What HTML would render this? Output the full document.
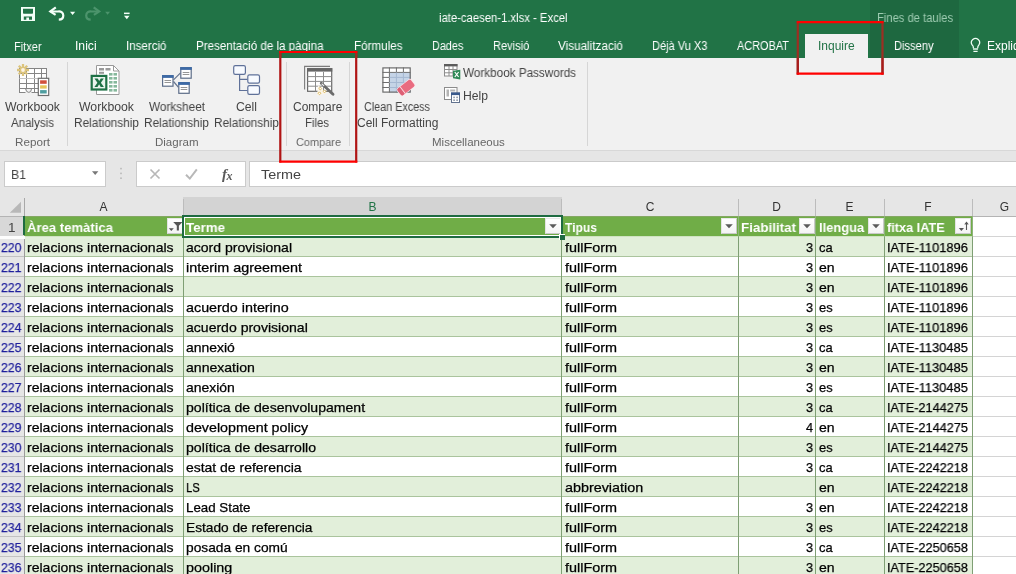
<!DOCTYPE html>
<html lang="ca"><head><meta charset="utf-8"><title>iate-caesen-1.xlsx - Excel</title>
<style>
html,body{margin:0;padding:0;background:#e6e6e6;}
#app{position:relative;width:1016px;height:574px;overflow:hidden;background:#e6e6e6;font-family:"Liberation Sans",sans-serif;font-size:12px;color:#444;}
#app div,#app span,#app svg{position:absolute;box-sizing:border-box;}
.t{will-change:transform;white-space:nowrap;transform-origin:0 50%;line-height:16px;height:16px;}
#titlebar{left:0;top:0;width:1016px;height:58px;background:#217346;}
#ctx{left:870px;top:0;width:89px;height:58px;background:#1e6840;}
#tabsel{left:805px;top:34px;width:63px;height:24px;background:#f1f1f1;}
.w{color:#fff;}
#ribbon{left:0;top:58px;width:1016px;height:92px;background:#f1f1f1;}
#ribline{left:0;top:150px;width:1016px;height:1px;background:#d8d8d8;}
.sep{width:1px;background:#d6d6d6;top:62px;height:84px;}
.gl{color:#666;}
.bl{color:#444;}
#fbar{left:0;top:151px;width:1016px;height:46px;background:#e6e6e6;}
.box{background:#fff;border:1px solid #cbcbcb;top:161px;height:26px;}
#colhdr{left:0;top:197px;width:1016px;height:20px;background:#e6e6e6;}
.ch{top:197px;height:20px;border-right:1px solid #c6c6c6;}
.cht{color:#333;font-size:12.5px;}
#grid{left:0;top:0;width:1016px;height:574px;}
.row{left:0;width:1016px;height:20px;}
.row.bg{background:linear-gradient(90deg,#e6e6e6 0,#e6e6e6 24px,#e2efda 24px,#e2efda 972px,#fff 972px);}
.row.bw{background:linear-gradient(90deg,#e6e6e6 0,#e6e6e6 24px,#fff 24px);}
.vl{width:1px;background:#bcbcbc;}
.fb{width:16px;height:16px;background:linear-gradient(#fff,#f4f4f4);border:1px solid #c9c9c9;border-top-color:#e9e9e9;border-left-color:#e3e3e3;}
.ctr{transform:none;}
.ce{-webkit-text-stroke:0.25px #000;}
.rn{-webkit-text-stroke:0.25px #1f1f9c;}

</style></head><body>
<div id="app">
<!-- title bar -->
<div id="titlebar"></div>
<div id="ctx"></div>
<div id="tabsel"></div>
<!-- quick access toolbar -->
<svg id="qat" style="left:0;top:0" width="140" height="30" viewBox="0 0 140 30">
  <rect x="21" y="7" width="14" height="14" fill="#f4fff8"/>
  <path d="M23 8.800h10v4.200q0 .8-.8.800h-8.400q-.8 0-.8-.8z" fill="#217346"/>
  <path d="M23.800 16.500h8.200v3.200h-3v-2.100h-2.700v2.100h-2.500z" fill="#217346"/>
  <g fill="none" stroke="#f4fff8" stroke-width="2.200">
    <path d="M50.500 11.500h7.500a4.200 4.200 0 0 1 5.300 4c0 2.400-1.800 4.100-4.500 4.200" />
    <path d="M55.800 7.300l-5.500 4.200 5.300 3.400" stroke-linejoin="miter"/>
  </g>
  <path d="M70 11.800h5.200l-2.600 3.300z" fill="#f4fff8"/>
  <g fill="none" stroke="#4c946c" stroke-width="2.200">
    <path d="M99 11.500h-7.500a4.200 4.200 0 0 0-5.300 4c0 2.400 1.800 4.100 4.500 4.200" />
    <path d="M93.700 7.300l5.500 4.200-5.300 3.400"/>
  </g>
  <path d="M105.200 11.800h4.800l-2.400 3z" fill="#4c946c"/>
  <rect x="124" y="12.600" width="5.600" height="1.500" fill="#f4fff8"/>
  <path d="M124 15.800h5.600l-2.800 3.400z" fill="#f4fff8"/>
</svg>
<!-- lightbulb -->
<svg style="left:968px;top:36px" width="16" height="18" viewBox="0 0 16 18">
  <path d="M5.300 12.300v-1.200c0-1-.7-1.600-1.200-2.200a4.100 4.100 0 1 1 6.800 0c-.5.600-1.100 1.200-1.100 2.200v1.200" fill="none" stroke="#f0fff6" stroke-width="1.250"/>
  <rect x="5" y="12.300" width="5" height="1.400" fill="#f0fff6"/>
  <rect x="5.400" y="14.800" width="4.200" height="1.200" fill="#f0fff6"/>
</svg>

<!-- ribbon -->
<div id="ribbon"></div>
<div id="ribline"></div>
<div class="sep" style="left:67px"></div>
<div class="sep" style="left:286px"></div>
<div class="sep" style="left:349px"></div>
<div class="sep" style="left:587px"></div>

<!-- icon: workbook analysis -->
<svg style="left:16px;top:62px" width="36" height="36" viewBox="16 62 36 36">
  <rect x="19.500" y="68.500" width="27" height="24" fill="#fff" stroke="#858585"/>
  <path d="M19.500 73.500h27M19.500 83.500h27M19.500 88.500h27M26.500 68.500v24M34.500 68.500v24M41.500 68.500v10" stroke="#858585" fill="none"/>
  <path d="M19.500 78.500h19" stroke="#c4c4c4" fill="none"/>
  <rect x="25.500" y="89.200" width="6" height="4.500" fill="#f1f1f1"/>
  <path d="M25.500 88.800q.8 3.600 3.300 3.600t2.700-3.600" stroke="#858585" fill="none"/>
  <g stroke="#dcc47c" stroke-width="2.300" stroke-linecap="butt">
    <path d="M23 64v12M17 70h12M18.800 65.800l8.400 8.400M27.200 65.800l-8.400 8.400"/>
  </g>
  <circle cx="23" cy="70" r="1.900" fill="#fdf3e4"/>
  <rect x="38.300" y="78.300" width="10.400" height="17.200" fill="#fff" stroke="#6e6e6e" stroke-width="1.200"/>
  <rect x="40.100" y="80.300" width="6.600" height="3.500" fill="#d2503c"/>
  <rect x="40.100" y="85.300" width="6.600" height="3.300" fill="#e6c458"/>
  <rect x="40.100" y="90.100" width="6.600" height="3.400" fill="#4f9ea0"/>
</svg>

<!-- icon: workbook relationship -->
<svg style="left:88px;top:62px" width="36" height="36" viewBox="88 62 36 36">
  <path d="M96.500 65.500h17l5.500 5.500v23.500h-22.500z" fill="#fff" stroke="#9a9a9a"/>
  <path d="M113.500 65.500v5.500h5.500" fill="none" stroke="#9a9a9a"/>
  <g fill="#9a9a9a"><rect x="99" y="68" width="5" height="2.500"/><rect x="105.500" y="68" width="5" height="2.500"/><rect x="99" y="71.800" width="5" height="2"/></g>
  <g fill="#86b89c">
    <rect x="109" y="73" width="3.500" height="2.600"/><rect x="113.500" y="73" width="3.500" height="2.600"/>
    <rect x="109" y="77" width="3.500" height="2.600"/><rect x="113.500" y="77" width="3.500" height="2.600"/>
    <rect x="109" y="81" width="3.500" height="2.600"/><rect x="113.500" y="81" width="3.500" height="2.600"/>
    <rect x="109" y="85" width="3.500" height="2.600"/><rect x="113.500" y="85" width="3.500" height="2.600"/>
    <rect x="109" y="89" width="3.500" height="2.600"/><rect x="113.500" y="89" width="3.500" height="2.600"/>
  </g>
  <rect x="90.600" y="74.800" width="16.800" height="15.800" fill="#1e7145"/>
  <rect x="92.800" y="77" width="12.400" height="11.400" fill="#e9f3ed"/>
  <path d="M94.500 78.500h3.200l1.500 2.600 1.600-2.600h3l-2.900 4.200 3 4.300h-3.200l-1.600-2.700-1.600 2.700h-3.100l3-4.300z" fill="#1e7145"/>
</svg>

<!-- icon: worksheet relationship -->
<svg style="left:158px;top:62px" width="38" height="36" viewBox="158 62 38 36">
  <path d="M173.500 79.800l7-7M173.500 81.500l5 5.800" stroke="#66758f" stroke-width="1.200" fill="none"/>
  <g>
    <rect x="162.600" y="75.700" width="10.400" height="10.500" fill="#fff" stroke="#5d6d88" stroke-width="1.200"/>
    <rect x="162" y="75.100" width="11.600" height="2.800" fill="#3d6aa6"/>
    <path d="M164.500 80.500h6.600M164.500 82.500h6.600" stroke="#8a8a8a" stroke-width=".9"/>
  </g>
  <g>
    <rect x="180.800" y="67.700" width="10.400" height="10.500" fill="#fff" stroke="#5d6d88" stroke-width="1.200"/>
    <rect x="180.200" y="67.100" width="11.600" height="2.800" fill="#3d6aa6"/>
    <path d="M182.700 72.500h6.600M182.700 74.500h6.600" stroke="#8a8a8a" stroke-width=".9"/>
  </g>
  <g>
    <rect x="178.800" y="82.700" width="10.400" height="10.600" fill="#fff" stroke="#5d6d88" stroke-width="1.200"/>
    <rect x="178.200" y="82.100" width="11.600" height="2.800" fill="#3d6aa6"/>
    <path d="M180.700 87.500h6.600M180.700 89.500h6.600" stroke="#8a8a8a" stroke-width=".9"/>
  </g>
</svg>

<!-- icon: cell relationship -->
<svg style="left:228px;top:62px" width="36" height="36" viewBox="228 62 36 36">
  <path d="M239.600 74.500v16h8M239.600 79.400h8" stroke="#5f7199" stroke-width="1.200" fill="none"/>
  <rect x="233.700" y="65.700" width="11.700" height="8.600" rx="1.600" fill="#f7faff" stroke="#5f7199" stroke-width="1.200"/>
  <rect x="247.800" y="74.800" width="11.700" height="8.300" rx="1.600" fill="#f7faff" stroke="#5f7199" stroke-width="1.200"/>
  <rect x="247.800" y="85.700" width="11.700" height="8.600" rx="1.600" fill="#f7faff" stroke="#5f7199" stroke-width="1.200"/>
</svg>

<!-- icon: compare files -->
<svg style="left:300px;top:62px" width="38" height="36" viewBox="300 62 38 36">
  <path d="M304.600 89.600v-23.200h25.400" fill="none" stroke="#7c7c7c" stroke-width="1.100"/>
  <rect x="307.600" y="68.700" width="24.100" height="22.600" fill="#fff" stroke="#6a6a6a" stroke-width="1.200"/>
  <rect x="307" y="68.100" width="25.300" height="3.500" fill="#666"/>
  <path d="M307.500 76.600h24M307.500 81.400h24M307.500 86.200h24M315.500 72v19.500M323.500 72v19.500" stroke="#8c8c8c" fill="none"/>
  <path d="M318 85l8.500 8.500l-9.500 2z" fill="#fbf4e6"/>
  <path d="M321.300 83.300l11.700 11" stroke="#6b6b6b" stroke-width="2.900" stroke-linecap="round" fill="none"/>
  <path d="M322 84l1.800 1.700" stroke="#f0f0f0" stroke-width="1.100" stroke-linecap="round" fill="none"/>
  <g fill="#fff" stroke="#d9b65a" stroke-width=".9">
    <rect x="319.300" y="87.500" width="2" height="2" transform="rotate(45 320.300 88.500)"/>
    <rect x="323.500" y="90.400" width="2" height="2" transform="rotate(45 324.500 91.400)"/>
    <rect x="318.500" y="92.300" width="2" height="2" transform="rotate(45 319.500 93.300)"/>
  </g>
</svg>

<!-- icon: clean excess -->
<svg style="left:378px;top:62px" width="40" height="36" viewBox="378 62 40 36">
  <rect x="382.300" y="67.300" width="28.400" height="25.300" fill="#fff"/>
  <rect x="389.400" y="72.400" width="21.300" height="20.200" fill="#c5d4e7"/>
  <path d="M382.500 72.400h7M382.500 77.400h7M382.500 82.500h7M382.500 87.500h7M389.400 72.400h21" stroke="#6e6e6e" fill="none"/>
  <path d="M389.400 67.500v25M396.400 67.500v5M403.400 67.500v5" stroke="#6e6e6e" fill="none"/>
  <path d="M396.400 72.500v20M403.400 72.500v20M389.400 77.400h21M389.400 82.500h21M389.400 87.500h21" stroke="#a5b8d2" fill="none"/>
  <rect x="382.900" y="67.900" width="27.300" height="24.200" fill="none" stroke="#6a6a6a" stroke-width="1.200"/>
  <g transform="rotate(-38 406 87.500)">
    <rect x="396.700" y="82.600" width="18.600" height="9.800" rx="2.400" fill="#fbe9ec"/>
    <rect x="397.500" y="83.300" width="17" height="8.400" rx="1.800" fill="#e96c80"/>
    <rect x="397.500" y="83.300" width="4" height="8.400" rx="1.600" fill="#dd5f75"/>
    <rect x="401.300" y="83.300" width=".9" height="8.400" fill="#fbe3e7"/>
  </g>
</svg>

<!-- icon small: workbook passwords -->
<svg style="left:442px;top:62px" width="22" height="20" viewBox="442 62 22 20">
  <rect x="444.500" y="64.500" width="12.500" height="11.500" fill="#fff" stroke="#8c8c8c"/>
  <rect x="444" y="64" width="13.500" height="2.400" fill="#5c5c5c"/>
  <path d="M444.500 69.500h12.500M444.500 72.800h12.500M449 66v10M453 66v10" stroke="#8c8c8c" fill="none"/>
  <path d="M453 70.800l7.300-1.100v9.700l-7.300-1.100z" fill="#2f8a57"/>
  <path d="M454.800 72l3.800 5M458.600 72l-3.800 5" stroke="#fff" stroke-width="1.200" fill="none"/>
</svg>
<!-- icon small: help -->
<svg style="left:442px;top:85px" width="22" height="20" viewBox="442 85 22 20">
  <rect x="444.500" y="87.500" width="12.500" height="12" fill="#fff" stroke="#8c8c8c"/>
  <rect x="446.500" y="89.500" width="2.500" height="7" fill="#b5b5b5"/>
  <rect x="450.200" y="89.500" width="5" height="2" fill="#b5b5b5"/>
  <rect x="451.500" y="93" width="8" height="9.500" fill="#fff" stroke="#62738f"/>
  <rect x="451" y="92.500" width="9" height="2.600" fill="#3a5a8c"/>
  <g fill="#9aa3b0"><rect x="453.200" y="96.600" width="1.800" height="1.600"/><rect x="456.200" y="96.600" width="1.800" height="1.600"/><rect x="453.200" y="99.400" width="1.800" height="1.600"/><rect x="456.200" y="99.400" width="1.800" height="1.600"/></g>
</svg>

<!-- formula bar -->
<div id="fbar"></div>
<div class="box" style="left:4px;width:102px"></div>
<div class="box" style="left:136px;width:110px"></div>
<div class="box" style="left:249px;width:780px"></div>
<svg style="left:88px;top:166px" width="160" height="18" viewBox="88 166 160 18">
  <path d="M92 171.200h6.400l-3.200 3.800z" fill="#777"/>
  <g fill="#b9b9b9"><rect x="120.200" y="167.800" width="1.600" height="1.600"/><rect x="120.200" y="172.600" width="1.600" height="1.600"/><rect x="120.200" y="177.400" width="1.600" height="1.600"/></g>
  <path d="M150.500 169.500l9 9M159.500 169.500l-9 9" stroke="#b8b8b8" stroke-width="1.700" fill="none"/>
  <path d="M186 174.800l3.800 3.800 7-9.200" stroke="#b8b8b8" stroke-width="2" fill="none"/>
</svg>
<span class="t" style="left:222px;top:166px;font-family:'Liberation Serif',serif;font-style:italic;font-weight:bold;font-size:15px;color:#5a5a5a;letter-spacing:-0.5px">f<span style="position:relative;top:1px;font-size:12px;letter-spacing:0">x</span></span>

<!-- column headers -->
<div id="colhdr"></div>
<div style="left:183px;top:197px;width:379px;height:20px;background:#d3d3d3;border-bottom:2px solid #217346"></div>
<div class="vl" style="left:24px;top:198px;height:18px;background:#a8a8a8"></div>
<div class="vl" style="left:183px;top:199px;height:18px"></div>
<div class="vl" style="left:561px;top:199px;height:18px"></div>
<div class="vl" style="left:738px;top:199px;height:18px"></div>
<div class="vl" style="left:815px;top:199px;height:18px"></div>
<div class="vl" style="left:884px;top:199px;height:18px"></div>
<div class="vl" style="left:972px;top:199px;height:18px"></div>
<svg style="left:8px;top:200px" width="15" height="14" viewBox="0 0 15 14"><path d="M13 1.800v11h-11.200z" fill="#b8b8b8"/></svg>

<div style="left:24px;top:216px;width:992px;height:358px;background:#fff"></div>
<div style="left:24px;top:237px;width:948px;height:20px;background:#e2efda"></div>
<div style="left:24px;top:277px;width:948px;height:20px;background:#e2efda"></div>
<div style="left:24px;top:317px;width:948px;height:20px;background:#e2efda"></div>
<div style="left:24px;top:357px;width:948px;height:20px;background:#e2efda"></div>
<div style="left:24px;top:397px;width:948px;height:20px;background:#e2efda"></div>
<div style="left:24px;top:437px;width:948px;height:20px;background:#e2efda"></div>
<div style="left:24px;top:477px;width:948px;height:20px;background:#e2efda"></div>
<div style="left:24px;top:517px;width:948px;height:20px;background:#e2efda"></div>
<div style="left:24px;top:557px;width:948px;height:20px;background:#e2efda"></div>
<div style="left:24px;top:216px;width:948px;height:20px;background:#70ad47"></div>
<div style="left:25px;top:216px;width:947px;height:1px;background:#84a763"></div>
<div style="left:24px;top:236px;width:948px;height:1px;background:#aac49d"></div>
<div style="left:973px;top:236px;width:43px;height:1px;background:#d4d4d4"></div>
<div style="left:24px;top:256px;width:948px;height:1px;background:#aac49d"></div>
<div style="left:973px;top:256px;width:43px;height:1px;background:#d4d4d4"></div>
<div style="left:24px;top:276px;width:948px;height:1px;background:#aac49d"></div>
<div style="left:973px;top:276px;width:43px;height:1px;background:#d4d4d4"></div>
<div style="left:24px;top:296px;width:948px;height:1px;background:#aac49d"></div>
<div style="left:973px;top:296px;width:43px;height:1px;background:#d4d4d4"></div>
<div style="left:24px;top:316px;width:948px;height:1px;background:#aac49d"></div>
<div style="left:973px;top:316px;width:43px;height:1px;background:#d4d4d4"></div>
<div style="left:24px;top:336px;width:948px;height:1px;background:#aac49d"></div>
<div style="left:973px;top:336px;width:43px;height:1px;background:#d4d4d4"></div>
<div style="left:24px;top:356px;width:948px;height:1px;background:#aac49d"></div>
<div style="left:973px;top:356px;width:43px;height:1px;background:#d4d4d4"></div>
<div style="left:24px;top:376px;width:948px;height:1px;background:#aac49d"></div>
<div style="left:973px;top:376px;width:43px;height:1px;background:#d4d4d4"></div>
<div style="left:24px;top:396px;width:948px;height:1px;background:#aac49d"></div>
<div style="left:973px;top:396px;width:43px;height:1px;background:#d4d4d4"></div>
<div style="left:24px;top:416px;width:948px;height:1px;background:#aac49d"></div>
<div style="left:973px;top:416px;width:43px;height:1px;background:#d4d4d4"></div>
<div style="left:24px;top:436px;width:948px;height:1px;background:#aac49d"></div>
<div style="left:973px;top:436px;width:43px;height:1px;background:#d4d4d4"></div>
<div style="left:24px;top:456px;width:948px;height:1px;background:#aac49d"></div>
<div style="left:973px;top:456px;width:43px;height:1px;background:#d4d4d4"></div>
<div style="left:24px;top:476px;width:948px;height:1px;background:#aac49d"></div>
<div style="left:973px;top:476px;width:43px;height:1px;background:#d4d4d4"></div>
<div style="left:24px;top:496px;width:948px;height:1px;background:#aac49d"></div>
<div style="left:973px;top:496px;width:43px;height:1px;background:#d4d4d4"></div>
<div style="left:24px;top:516px;width:948px;height:1px;background:#aac49d"></div>
<div style="left:973px;top:516px;width:43px;height:1px;background:#d4d4d4"></div>
<div style="left:24px;top:536px;width:948px;height:1px;background:#aac49d"></div>
<div style="left:973px;top:536px;width:43px;height:1px;background:#d4d4d4"></div>
<div style="left:24px;top:556px;width:948px;height:1px;background:#aac49d"></div>
<div style="left:973px;top:556px;width:43px;height:1px;background:#d4d4d4"></div>
<div style="left:24px;top:576px;width:948px;height:1px;background:#aac49d"></div>
<div style="left:973px;top:576px;width:43px;height:1px;background:#d4d4d4"></div>
<div style="left:24px;top:236px;width:948px;height:1px;background:#cfe3c2"></div>
<div style="left:183px;top:237px;width:1px;height:337px;background:#7f9f74"></div>
<div style="left:183px;top:216px;width:1px;height:21px;background:#8fb37c"></div>
<div style="left:561px;top:237px;width:1px;height:337px;background:#7f9f74"></div>
<div style="left:561px;top:216px;width:1px;height:21px;background:#8fb37c"></div>
<div style="left:738px;top:237px;width:1px;height:337px;background:#7f9f74"></div>
<div style="left:738px;top:216px;width:1px;height:21px;background:#8fb37c"></div>
<div style="left:815px;top:237px;width:1px;height:337px;background:#7f9f74"></div>
<div style="left:815px;top:216px;width:1px;height:21px;background:#8fb37c"></div>
<div style="left:884px;top:237px;width:1px;height:337px;background:#7f9f74"></div>
<div style="left:884px;top:216px;width:1px;height:21px;background:#8fb37c"></div>
<div style="left:972px;top:237px;width:1px;height:337px;background:#7f9f74"></div>
<div style="left:972px;top:216px;width:1px;height:21px;background:#8fb37c"></div>
<div style="left:0;top:216px;width:24px;height:358px;background:#e6e6e6"></div>
<div style="left:0;top:216px;width:24px;height:20px;background:#d8d8d8"></div>
<div style="left:23px;top:216px;width:2px;height:19px;background:#1e6b41"></div>
<div style="left:24px;top:238px;width:1px;height:336px;background:#9c9c9c"></div>
<div style="left:0;top:236px;width:25px;height:3px;background:#fdfdfd"></div>
<div style="left:0;top:256px;width:24px;height:1px;background:#c2c2c2"></div>
<div style="left:0;top:276px;width:24px;height:1px;background:#c2c2c2"></div>
<div style="left:0;top:296px;width:24px;height:1px;background:#c2c2c2"></div>
<div style="left:0;top:316px;width:24px;height:1px;background:#c2c2c2"></div>
<div style="left:0;top:336px;width:24px;height:1px;background:#c2c2c2"></div>
<div style="left:0;top:356px;width:24px;height:1px;background:#c2c2c2"></div>
<div style="left:0;top:376px;width:24px;height:1px;background:#c2c2c2"></div>
<div style="left:0;top:396px;width:24px;height:1px;background:#c2c2c2"></div>
<div style="left:0;top:416px;width:24px;height:1px;background:#c2c2c2"></div>
<div style="left:0;top:436px;width:24px;height:1px;background:#c2c2c2"></div>
<div style="left:0;top:456px;width:24px;height:1px;background:#c2c2c2"></div>
<div style="left:0;top:476px;width:24px;height:1px;background:#c2c2c2"></div>
<div style="left:0;top:496px;width:24px;height:1px;background:#c2c2c2"></div>
<div style="left:0;top:516px;width:24px;height:1px;background:#c2c2c2"></div>
<div style="left:0;top:536px;width:24px;height:1px;background:#c2c2c2"></div>
<div style="left:0;top:556px;width:24px;height:1px;background:#c2c2c2"></div>
<div style="left:0;top:576px;width:24px;height:1px;background:#c2c2c2"></div>
<div style="left:0;top:216px;width:23px;height:1px;background:#b4b4b4"></div>
<div style="left:973px;top:216px;width:43px;height:1px;background:#b4b4b4"></div>
<div class="fb" style="left:167px;top:218px"></div><svg style="left:167px;top:218px" width="16" height="16" viewBox="0 0 16 16"><path d="M6.200 4h9.300l-3.600 3.800v4.800h-2.100v-4.800z" fill="#555"/><path d="M1.800 10.200h5l-2.500 2.800z" fill="#555"/></svg>
<div class="fb" style="left:545px;top:218px"></div><svg style="left:545px;top:218px" width="16" height="16" viewBox="0 0 16 16"><path d="M4.200 6.200h7.600l-3.800 4z" fill="#5a5a5a"/></svg>
<div class="fb" style="left:721px;top:218px"></div><svg style="left:721px;top:218px" width="16" height="16" viewBox="0 0 16 16"><path d="M4.200 6.200h7.600l-3.800 4z" fill="#5a5a5a"/></svg>
<div class="fb" style="left:799px;top:218px"></div><svg style="left:799px;top:218px" width="16" height="16" viewBox="0 0 16 16"><path d="M4.200 6.200h7.600l-3.800 4z" fill="#5a5a5a"/></svg>
<div class="fb" style="left:868px;top:218px"></div><svg style="left:868px;top:218px" width="16" height="16" viewBox="0 0 16 16"><path d="M4.200 6.200h7.600l-3.800 4z" fill="#5a5a5a"/></svg>
<div class="fb" style="left:955px;top:218px"></div><svg style="left:955px;top:218px" width="16" height="16" viewBox="0 0 16 16"><path d="M3.800 10h5.200l-2.600 3z" fill="#555"/><path d="M11.500 4.500v7.500M9.800 6.500l1.700-2.200 1.700 2.200" stroke="#555" stroke-width="1.100" fill="none"/></svg>
<div style="left:182px;top:215px;width:381px;height:23px;border:2px solid #1e6b41;box-shadow:inset 0 0 0 1px #fff"></div>
<div style="left:559px;top:234px;width:6px;height:6px;background:#1e6b41;border:1px solid #fff;border-right:0;border-bottom:0"></div>
<span class="t" style="left:439.2px;top:10px;font-size:12px;color:#fff;transform:scaleX(0.940);">iate-caesen-1.xlsx - Excel</span>
<span class="t" style="left:876.7px;top:10px;font-size:12px;color:#9fccb2;transform:scaleX(0.934);">Fines de taules</span>
<span class="t" style="left:14.3px;top:39px;font-size:12px;color:#fff;transform:scaleX(0.920);">Fitxer</span>
<span class="t" style="left:75.3px;top:38px;font-size:12px;color:#fff;transform:scaleX(1.012);">Inici</span>
<span class="t" style="left:126.3px;top:38px;font-size:12px;color:#fff;transform:scaleX(0.961);">Inserció</span>
<span class="t" style="left:196.3px;top:38px;font-size:12px;color:#fff;transform:scaleX(0.965);">Presentació de la pàgina</span>
<span class="t" style="left:353.6px;top:38px;font-size:12px;color:#fff;transform:scaleX(0.970);">Fórmules</span>
<span class="t" style="left:431.5px;top:38px;font-size:12px;color:#fff;transform:scaleX(0.902);">Dades</span>
<span class="t" style="left:492.5px;top:38px;font-size:12px;color:#fff;transform:scaleX(0.922);">Revisió</span>
<span class="t" style="left:558.2px;top:38px;font-size:12px;color:#fff;transform:scaleX(0.975);">Visualització</span>
<span class="t" style="left:652.3px;top:38px;font-size:12px;color:#fff;transform:scaleX(0.921);">Déjà Vu X3</span>
<span class="t" style="left:737.2px;top:38px;font-size:12px;color:#fff;transform:scaleX(0.909);">ACROBAT</span>
<span class="t" style="left:893.8px;top:38px;font-size:12px;color:#fff;transform:scaleX(0.928);">Disseny</span>
<span class="t" style="left:818.3px;top:38px;font-size:12px;color:#217346;">Inquire</span>
<span class="t" style="left:987.4px;top:38px;font-size:12px;color:#fff;">Expliqueu-me què voleu fer</span>
<span class="t" style="left:5.0px;top:99px;font-size:12px;color:#444;transform:scaleX(1.022);">Workbook</span>
<span class="t" style="left:11.0px;top:115px;font-size:12px;color:#444;transform:scaleX(0.962);">Analysis</span>
<span class="t" style="left:79.0px;top:99px;font-size:12px;color:#444;transform:scaleX(1.022);">Workbook</span>
<span class="t" style="left:74.0px;top:115px;font-size:12px;color:#444;transform:scaleX(0.984);">Relationship</span>
<span class="t" style="left:149.0px;top:99px;font-size:12px;color:#444;transform:scaleX(0.980);">Worksheet</span>
<span class="t" style="left:144.0px;top:115px;font-size:12px;color:#444;transform:scaleX(0.984);">Relationship</span>
<span class="t" style="left:236.0px;top:99px;font-size:12px;color:#444;transform:scaleX(1.016);">Cell</span>
<span class="t" style="left:214.0px;top:115px;font-size:12px;color:#444;transform:scaleX(0.984);">Relationship</span>
<span class="t" style="left:293.0px;top:99px;font-size:12px;color:#444;transform:scaleX(0.993);">Compare</span>
<span class="t" style="left:305.0px;top:115px;font-size:12px;color:#444;transform:scaleX(0.947);">Files</span>
<span class="t" style="left:364.0px;top:99px;font-size:12px;color:#444;transform:scaleX(0.899);">Clean Excess</span>
<span class="t" style="left:357.0px;top:115px;font-size:12px;color:#444;transform:scaleX(0.996);">Cell Formatting</span>
<span class="t" style="left:463.0px;top:65px;font-size:12px;color:#444;transform:scaleX(0.976);">Workbook Passwords</span>
<span class="t" style="left:463.0px;top:88px;font-size:12px;color:#444;transform:scaleX(1.013);">Help</span>
<span class="t" style="left:15.0px;top:134px;font-size:11.5px;color:#666;transform:scaleX(1.014);">Report</span>
<span class="t" style="left:155.0px;top:134px;font-size:11.5px;color:#666;transform:scaleX(0.989);">Diagram</span>
<span class="t" style="left:296.0px;top:134px;font-size:11.5px;color:#666;transform:scaleX(0.951);">Compare</span>
<span class="t" style="left:432.0px;top:134px;font-size:11.5px;color:#666;">Miscellaneous</span>
<span class="t" style="left:11.0px;top:167px;font-size:13px;color:#444;transform:scaleX(0.943);">B1</span>
<span class="t" style="left:260.6px;top:167px;font-size:13px;color:#444;transform:scaleX(1.107);">Terme</span>
<span class="t ctr" style="left:24.0px;top:199px;font-size:12px;color:#333;width:159px;text-align:center;">A</span>
<span class="t ctr" style="left:183.0px;top:199px;font-size:12px;color:#217346;width:379px;text-align:center;">B</span>
<span class="t ctr" style="left:562.0px;top:199px;font-size:12px;color:#333;width:176px;text-align:center;">C</span>
<span class="t ctr" style="left:738.0px;top:199px;font-size:12px;color:#333;width:77px;text-align:center;">D</span>
<span class="t ctr" style="left:815.0px;top:199px;font-size:12px;color:#333;width:69px;text-align:center;">E</span>
<span class="t ctr" style="left:884.0px;top:199px;font-size:12px;color:#333;width:88px;text-align:center;">F</span>
<span class="t ctr" style="left:972.0px;top:199px;font-size:12px;color:#333;width:65px;text-align:center;">G</span>
<span class="t" style="left:27.0px;top:220px;font-size:13.5px;color:#fff;font-weight:bold;transform:scaleX(0.971);">Àrea temàtica</span>
<span class="t" style="left:186.0px;top:220px;font-size:13.5px;color:#fff;font-weight:bold;transform:scaleX(0.987);">Terme</span>
<span class="t" style="left:564.5px;top:220px;font-size:13.5px;color:#fff;font-weight:bold;transform:scaleX(0.895);">Tipus</span>
<span class="t" style="left:741.0px;top:220px;font-size:13.5px;color:#fff;font-weight:bold;transform:scaleX(0.991);">Fiabilitat</span>
<span class="t" style="left:818.5px;top:220px;font-size:13.5px;color:#fff;font-weight:bold;transform:scaleX(0.956);">llengua</span>
<span class="t" style="left:887.0px;top:220px;font-size:13.5px;color:#fff;font-weight:bold;transform:scaleX(0.942);">fitxa IATE</span>
<span class="t" style="left:7.6px;top:220px;font-size:13.5px;color:#444;">1</span>
<span class="t rn" style="left:1.0px;top:240px;font-size:13px;color:#1f1f9c;transform:scaleX(0.940);">220</span>
<span class="t ce" style="left:27.0px;top:240px;font-size:13px;color:#000;transform:scaleX(1.079);">relacions internacionals</span>
<span class="t ce" style="left:186.3px;top:240px;font-size:13px;color:#000;transform:scaleX(1.079);">acord provisional</span>
<span class="t ce" style="left:564.5px;top:240px;font-size:13px;color:#000;transform:scaleX(1.108);">fullForm</span>
<span class="t ce" style="left:805.9px;top:240px;font-size:13px;color:#000;transform:scaleX(0.968);">3</span>
<span class="t ce" style="left:818.5px;top:240px;font-size:13px;color:#000;transform:scaleX(0.993);">ca</span>
<span class="t ce" style="left:887.0px;top:240px;font-size:13px;color:#000;transform:scaleX(0.986);">IATE-1101896</span>
<span class="t rn" style="left:1.0px;top:260px;font-size:13px;color:#1f1f9c;transform:scaleX(0.940);">221</span>
<span class="t ce" style="left:27.0px;top:260px;font-size:13px;color:#000;transform:scaleX(1.079);">relacions internacionals</span>
<span class="t ce" style="left:186.3px;top:260px;font-size:13px;color:#000;transform:scaleX(1.106);">interim agreement</span>
<span class="t ce" style="left:564.5px;top:260px;font-size:13px;color:#000;transform:scaleX(1.108);">fullForm</span>
<span class="t ce" style="left:805.9px;top:260px;font-size:13px;color:#000;transform:scaleX(0.968);">3</span>
<span class="t ce" style="left:818.5px;top:260px;font-size:13px;color:#000;transform:scaleX(1.079);">en</span>
<span class="t ce" style="left:887.0px;top:260px;font-size:13px;color:#000;transform:scaleX(0.986);">IATE-1101896</span>
<span class="t rn" style="left:1.0px;top:280px;font-size:13px;color:#1f1f9c;transform:scaleX(0.940);">222</span>
<span class="t ce" style="left:27.0px;top:280px;font-size:13px;color:#000;transform:scaleX(1.079);">relacions internacionals</span>
<span class="t ce" style="left:564.5px;top:280px;font-size:13px;color:#000;transform:scaleX(1.108);">fullForm</span>
<span class="t ce" style="left:805.9px;top:280px;font-size:13px;color:#000;transform:scaleX(0.968);">3</span>
<span class="t ce" style="left:818.5px;top:280px;font-size:13px;color:#000;transform:scaleX(1.079);">en</span>
<span class="t ce" style="left:887.0px;top:280px;font-size:13px;color:#000;transform:scaleX(0.986);">IATE-1101896</span>
<span class="t rn" style="left:1.0px;top:300px;font-size:13px;color:#1f1f9c;transform:scaleX(0.940);">223</span>
<span class="t ce" style="left:27.0px;top:300px;font-size:13px;color:#000;transform:scaleX(1.079);">relacions internacionals</span>
<span class="t ce" style="left:186.3px;top:300px;font-size:13px;color:#000;transform:scaleX(1.102);">acuerdo interino</span>
<span class="t ce" style="left:564.5px;top:300px;font-size:13px;color:#000;transform:scaleX(1.108);">fullForm</span>
<span class="t ce" style="left:805.9px;top:300px;font-size:13px;color:#000;transform:scaleX(0.968);">3</span>
<span class="t ce" style="left:818.5px;top:300px;font-size:13px;color:#000;transform:scaleX(0.987);">es</span>
<span class="t ce" style="left:887.0px;top:300px;font-size:13px;color:#000;transform:scaleX(0.986);">IATE-1101896</span>
<span class="t rn" style="left:1.0px;top:320px;font-size:13px;color:#1f1f9c;transform:scaleX(0.940);">224</span>
<span class="t ce" style="left:27.0px;top:320px;font-size:13px;color:#000;transform:scaleX(1.079);">relacions internacionals</span>
<span class="t ce" style="left:186.3px;top:320px;font-size:13px;color:#000;transform:scaleX(1.080);">acuerdo provisional</span>
<span class="t ce" style="left:564.5px;top:320px;font-size:13px;color:#000;transform:scaleX(1.108);">fullForm</span>
<span class="t ce" style="left:805.9px;top:320px;font-size:13px;color:#000;transform:scaleX(0.968);">3</span>
<span class="t ce" style="left:818.5px;top:320px;font-size:13px;color:#000;transform:scaleX(0.987);">es</span>
<span class="t ce" style="left:887.0px;top:320px;font-size:13px;color:#000;transform:scaleX(0.986);">IATE-1101896</span>
<span class="t rn" style="left:1.0px;top:340px;font-size:13px;color:#1f1f9c;transform:scaleX(0.940);">225</span>
<span class="t ce" style="left:27.0px;top:340px;font-size:13px;color:#000;transform:scaleX(1.079);">relacions internacionals</span>
<span class="t ce" style="left:186.3px;top:340px;font-size:13px;color:#000;transform:scaleX(1.072);">annexió</span>
<span class="t ce" style="left:564.5px;top:340px;font-size:13px;color:#000;transform:scaleX(1.108);">fullForm</span>
<span class="t ce" style="left:805.9px;top:340px;font-size:13px;color:#000;transform:scaleX(0.968);">3</span>
<span class="t ce" style="left:818.5px;top:340px;font-size:13px;color:#000;transform:scaleX(0.993);">ca</span>
<span class="t ce" style="left:887.0px;top:340px;font-size:13px;color:#000;transform:scaleX(0.986);">IATE-1130485</span>
<span class="t rn" style="left:1.0px;top:360px;font-size:13px;color:#1f1f9c;transform:scaleX(0.940);">226</span>
<span class="t ce" style="left:27.0px;top:360px;font-size:13px;color:#000;transform:scaleX(1.079);">relacions internacionals</span>
<span class="t ce" style="left:186.3px;top:360px;font-size:13px;color:#000;transform:scaleX(1.081);">annexation</span>
<span class="t ce" style="left:564.5px;top:360px;font-size:13px;color:#000;transform:scaleX(1.108);">fullForm</span>
<span class="t ce" style="left:805.9px;top:360px;font-size:13px;color:#000;transform:scaleX(0.968);">3</span>
<span class="t ce" style="left:818.5px;top:360px;font-size:13px;color:#000;transform:scaleX(1.079);">en</span>
<span class="t ce" style="left:887.0px;top:360px;font-size:13px;color:#000;transform:scaleX(0.986);">IATE-1130485</span>
<span class="t rn" style="left:1.0px;top:380px;font-size:13px;color:#1f1f9c;transform:scaleX(0.940);">227</span>
<span class="t ce" style="left:27.0px;top:380px;font-size:13px;color:#000;transform:scaleX(1.079);">relacions internacionals</span>
<span class="t ce" style="left:186.3px;top:380px;font-size:13px;color:#000;transform:scaleX(1.072);">anexión</span>
<span class="t ce" style="left:564.5px;top:380px;font-size:13px;color:#000;transform:scaleX(1.108);">fullForm</span>
<span class="t ce" style="left:805.9px;top:380px;font-size:13px;color:#000;transform:scaleX(0.968);">3</span>
<span class="t ce" style="left:818.5px;top:380px;font-size:13px;color:#000;transform:scaleX(0.987);">es</span>
<span class="t ce" style="left:887.0px;top:380px;font-size:13px;color:#000;transform:scaleX(0.986);">IATE-1130485</span>
<span class="t rn" style="left:1.0px;top:400px;font-size:13px;color:#1f1f9c;transform:scaleX(0.940);">228</span>
<span class="t ce" style="left:27.0px;top:400px;font-size:13px;color:#000;transform:scaleX(1.079);">relacions internacionals</span>
<span class="t ce" style="left:186.3px;top:400px;font-size:13px;color:#000;transform:scaleX(1.082);">política de desenvolupament</span>
<span class="t ce" style="left:564.5px;top:400px;font-size:13px;color:#000;transform:scaleX(1.108);">fullForm</span>
<span class="t ce" style="left:805.9px;top:400px;font-size:13px;color:#000;transform:scaleX(0.968);">3</span>
<span class="t ce" style="left:818.5px;top:400px;font-size:13px;color:#000;transform:scaleX(0.993);">ca</span>
<span class="t ce" style="left:887.0px;top:400px;font-size:13px;color:#000;transform:scaleX(0.975);">IATE-2144275</span>
<span class="t rn" style="left:1.0px;top:420px;font-size:13px;color:#1f1f9c;transform:scaleX(0.940);">229</span>
<span class="t ce" style="left:27.0px;top:420px;font-size:13px;color:#000;transform:scaleX(1.079);">relacions internacionals</span>
<span class="t ce" style="left:186.3px;top:420px;font-size:13px;color:#000;transform:scaleX(1.097);">development policy</span>
<span class="t ce" style="left:564.5px;top:420px;font-size:13px;color:#000;transform:scaleX(1.108);">fullForm</span>
<span class="t ce" style="left:805.9px;top:420px;font-size:13px;color:#000;transform:scaleX(0.968);">4</span>
<span class="t ce" style="left:818.5px;top:420px;font-size:13px;color:#000;transform:scaleX(1.079);">en</span>
<span class="t ce" style="left:887.0px;top:420px;font-size:13px;color:#000;transform:scaleX(0.975);">IATE-2144275</span>
<span class="t rn" style="left:1.0px;top:440px;font-size:13px;color:#1f1f9c;transform:scaleX(0.940);">230</span>
<span class="t ce" style="left:27.0px;top:440px;font-size:13px;color:#000;transform:scaleX(1.079);">relacions internacionals</span>
<span class="t ce" style="left:186.3px;top:440px;font-size:13px;color:#000;transform:scaleX(1.084);">política de desarrollo</span>
<span class="t ce" style="left:564.5px;top:440px;font-size:13px;color:#000;transform:scaleX(1.108);">fullForm</span>
<span class="t ce" style="left:805.9px;top:440px;font-size:13px;color:#000;transform:scaleX(0.968);">3</span>
<span class="t ce" style="left:818.5px;top:440px;font-size:13px;color:#000;transform:scaleX(0.987);">es</span>
<span class="t ce" style="left:887.0px;top:440px;font-size:13px;color:#000;transform:scaleX(0.975);">IATE-2144275</span>
<span class="t rn" style="left:1.0px;top:460px;font-size:13px;color:#1f1f9c;transform:scaleX(0.940);">231</span>
<span class="t ce" style="left:27.0px;top:460px;font-size:13px;color:#000;transform:scaleX(1.079);">relacions internacionals</span>
<span class="t ce" style="left:186.3px;top:460px;font-size:13px;color:#000;transform:scaleX(1.073);">estat de referencia</span>
<span class="t ce" style="left:564.5px;top:460px;font-size:13px;color:#000;transform:scaleX(1.108);">fullForm</span>
<span class="t ce" style="left:805.9px;top:460px;font-size:13px;color:#000;transform:scaleX(0.968);">3</span>
<span class="t ce" style="left:818.5px;top:460px;font-size:13px;color:#000;transform:scaleX(0.993);">ca</span>
<span class="t ce" style="left:887.0px;top:460px;font-size:13px;color:#000;transform:scaleX(0.975);">IATE-2242218</span>
<span class="t rn" style="left:1.0px;top:480px;font-size:13px;color:#1f1f9c;transform:scaleX(0.940);">232</span>
<span class="t ce" style="left:27.0px;top:480px;font-size:13px;color:#000;transform:scaleX(1.079);">relacions internacionals</span>
<span class="t ce" style="left:186.3px;top:480px;font-size:13px;color:#000;transform:scaleX(0.860);">LS</span>
<span class="t ce" style="left:564.5px;top:480px;font-size:13px;color:#000;transform:scaleX(1.103);">abbreviation</span>
<span class="t ce" style="left:818.5px;top:480px;font-size:13px;color:#000;transform:scaleX(1.079);">en</span>
<span class="t ce" style="left:887.0px;top:480px;font-size:13px;color:#000;transform:scaleX(0.975);">IATE-2242218</span>
<span class="t rn" style="left:1.0px;top:500px;font-size:13px;color:#1f1f9c;transform:scaleX(0.940);">233</span>
<span class="t ce" style="left:27.0px;top:500px;font-size:13px;color:#000;transform:scaleX(1.079);">relacions internacionals</span>
<span class="t ce" style="left:186.3px;top:500px;font-size:13px;color:#000;transform:scaleX(1.024);">Lead State</span>
<span class="t ce" style="left:564.5px;top:500px;font-size:13px;color:#000;transform:scaleX(1.108);">fullForm</span>
<span class="t ce" style="left:805.9px;top:500px;font-size:13px;color:#000;transform:scaleX(0.968);">3</span>
<span class="t ce" style="left:818.5px;top:500px;font-size:13px;color:#000;transform:scaleX(1.079);">en</span>
<span class="t ce" style="left:887.0px;top:500px;font-size:13px;color:#000;transform:scaleX(0.975);">IATE-2242218</span>
<span class="t rn" style="left:1.0px;top:520px;font-size:13px;color:#1f1f9c;transform:scaleX(0.940);">234</span>
<span class="t ce" style="left:27.0px;top:520px;font-size:13px;color:#000;transform:scaleX(1.079);">relacions internacionals</span>
<span class="t ce" style="left:186.3px;top:520px;font-size:13px;color:#000;transform:scaleX(1.054);">Estado de referencia</span>
<span class="t ce" style="left:564.5px;top:520px;font-size:13px;color:#000;transform:scaleX(1.108);">fullForm</span>
<span class="t ce" style="left:805.9px;top:520px;font-size:13px;color:#000;transform:scaleX(0.968);">3</span>
<span class="t ce" style="left:818.5px;top:520px;font-size:13px;color:#000;transform:scaleX(0.987);">es</span>
<span class="t ce" style="left:887.0px;top:520px;font-size:13px;color:#000;transform:scaleX(0.975);">IATE-2242218</span>
<span class="t rn" style="left:1.0px;top:540px;font-size:13px;color:#1f1f9c;transform:scaleX(0.940);">235</span>
<span class="t ce" style="left:27.0px;top:540px;font-size:13px;color:#000;transform:scaleX(1.079);">relacions internacionals</span>
<span class="t ce" style="left:186.3px;top:540px;font-size:13px;color:#000;transform:scaleX(1.058);">posada en comú</span>
<span class="t ce" style="left:564.5px;top:540px;font-size:13px;color:#000;transform:scaleX(1.108);">fullForm</span>
<span class="t ce" style="left:805.9px;top:540px;font-size:13px;color:#000;transform:scaleX(0.968);">3</span>
<span class="t ce" style="left:818.5px;top:540px;font-size:13px;color:#000;transform:scaleX(0.993);">ca</span>
<span class="t ce" style="left:887.0px;top:540px;font-size:13px;color:#000;transform:scaleX(0.975);">IATE-2250658</span>
<span class="t rn" style="left:1.0px;top:560px;font-size:13px;color:#1f1f9c;transform:scaleX(0.940);">236</span>
<span class="t ce" style="left:27.0px;top:560px;font-size:13px;color:#000;transform:scaleX(1.079);">relacions internacionals</span>
<span class="t ce" style="left:186.3px;top:560px;font-size:13px;color:#000;transform:scaleX(1.104);">pooling</span>
<span class="t ce" style="left:564.5px;top:560px;font-size:13px;color:#000;transform:scaleX(1.108);">fullForm</span>
<span class="t ce" style="left:805.9px;top:560px;font-size:13px;color:#000;transform:scaleX(0.968);">3</span>
<span class="t ce" style="left:818.5px;top:560px;font-size:13px;color:#000;transform:scaleX(1.079);">en</span>
<span class="t ce" style="left:887.0px;top:560px;font-size:13px;color:#000;transform:scaleX(0.975);">IATE-2250658</span>
<!-- annotation rectangles -->
<svg style="left:0;top:0" width="1016" height="200" viewBox="0 0 1016 200">
  <g fill="none" stroke-width="2.200">
    <path d="M797.800 21.200v53.400" stroke="#9c2f22"/>
    <path d="M882.500 21.200v53.400" stroke="#9c2f22"/>
    <path d="M797.800 58v16.600M882.500 58v16.600" stroke="#a81c1c"/>
    <path d="M796.700 22.200h86.900M796.700 73.600h86.900" stroke="#ff0000"/>
    <path d="M280.300 51v111.600M356.200 51v111.600" stroke="#b01414"/>
    <path d="M280.300 51v7M356.200 51v7" stroke="#9c2f22"/>
    <path d="M279.200 52h78.100M279.200 161.600h78.100" stroke="#ff0000"/>
  </g>
</svg>

</div>
</body></html>
